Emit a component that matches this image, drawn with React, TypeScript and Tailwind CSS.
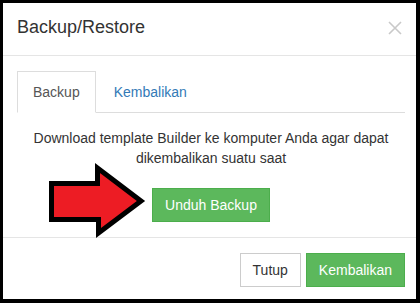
import React from "react";

export default function App() {
  return (
    <div
      className="relative w-[420px] h-[303px] overflow-hidden bg-white border-black border-t-[3px] border-l-[3px] border-r-4 border-b-4 text-[#333]"
      style={{ fontFamily: '"Liberation Sans", Arial, sans-serif' }}
    >
      {/* header */}
      <div className="flex items-start justify-between h-[53px] pl-[14px] pr-[14px] pt-[11px] border-b border-[#e5e5e5]">
        <h4 className="text-[18px] leading-[26px] text-[#333]">Backup/Restore</h4>
        <svg width="14" height="14" viewBox="0 0 14 14" className="mt-[7px]">
          <path d="M1 1 L13 13 M13 1 L1 13" stroke="#c9c9c9" strokeWidth="1.6" fill="none" />
        </svg>
      </div>

      {/* body */}
      <div className="pl-[14px] pr-[11px] pt-[15px] pb-[15px] border-b border-[#e5e5e5]">
        <div className="flex border-b border-[#ddd]">
          <div className="-mb-px mr-[2px] px-[15px] py-[10px] text-sm leading-5 text-[#555] bg-white border border-[#ddd] border-b-transparent">
            Backup
          </div>
          <div className="-mb-px px-[15px] py-[10px] text-sm leading-5 text-[#337ab7] border border-transparent">
            Kembalikan
          </div>
        </div>
        <p className="mt-[15px] text-center text-sm leading-5 text-[#333]">
          Download template Builder ke komputer Anda agar dapat dikembalikan suatu saat
        </p>
        <button className="block mx-auto mt-[20px] px-3 py-[6px] text-sm leading-5 text-white bg-[#5cb85c] border border-[#4cae4c]">
          Unduh Backup
        </button>
      </div>

      {/* footer */}
      <div className="flex justify-end gap-[5px] pt-[15px] pr-[11px]">
        <button className="px-3 py-[6px] text-sm leading-5 text-[#333] bg-white border border-[#ccc]">
          Tutup
        </button>
        <button className="px-3 py-[6px] text-sm leading-5 text-white bg-[#5cb85c] border border-[#4cae4c]">
          Kembalikan
        </button>
      </div>

      {/* red arrow annotation */}
      <svg
        width="106"
        height="86"
        viewBox="0 0 106 86"
        className="absolute left-[41px] top-[155px] pointer-events-none"
      >
        <polygon
          points="7.5,25.5 53.5,25.5 53.5,10 97,43 54.5,75 54.5,61.5 7.5,61.5"
          fill="#ed1c24"
          stroke="#000"
          strokeWidth="5"
          strokeLinejoin="miter"
          strokeMiterlimit="10"
        />
      </svg>
    </div>
  );
}
